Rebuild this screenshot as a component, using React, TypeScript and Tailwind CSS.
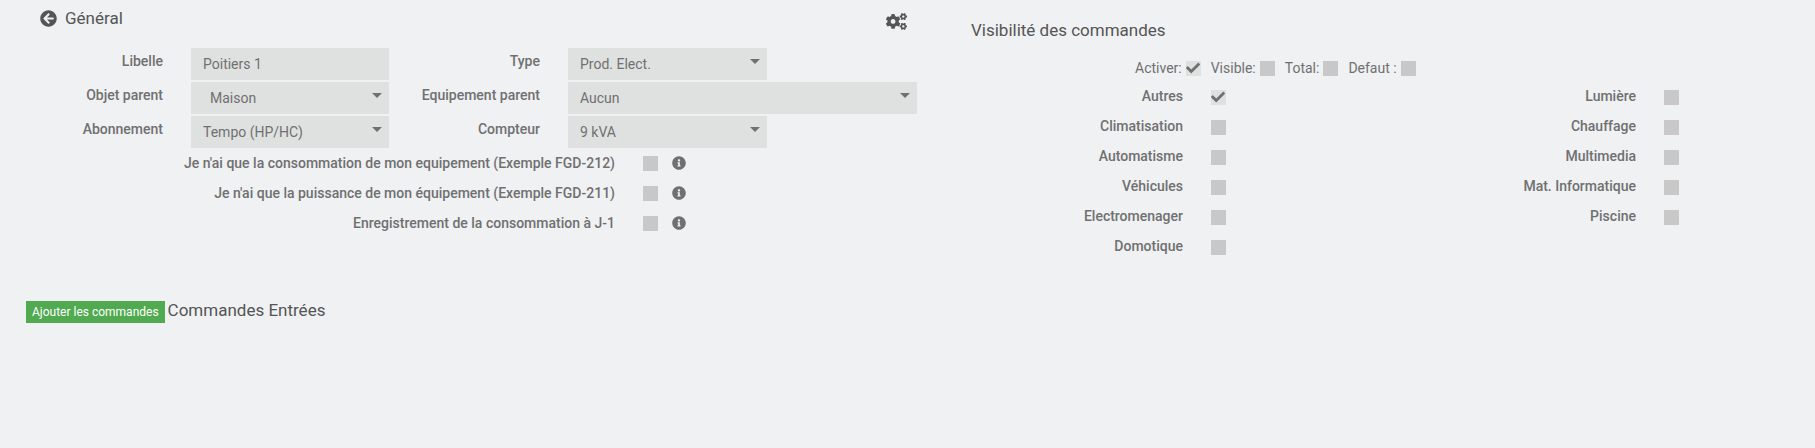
import { useId, type ReactNode } from "react";
import { FaArrowCircleLeft, FaCheck, FaCogs, FaInfoCircle } from "react-icons/fa";

function Tick({ id, name, checked = false }: { id: string; name?: string; checked?: boolean }) {
  return (
    <span className="inline-grid size-[15px] shrink-0">
      <input
        id={id}
        name={name}
        type="checkbox"
        defaultChecked={checked}
        className="peer col-start-1 row-start-1 size-[15px] appearance-none bg-[#c8c8c8] checked:bg-[#dfe1e0]"
      />
      <FaCheck className="pointer-events-none col-start-1 row-start-1 hidden size-3.5 peer-checked:block" />
    </span>
  );
}

function FieldLabel({ htmlFor, children }: { htmlFor: string; children: ReactNode }) {
  return (
    <label htmlFor={htmlFor} className="pt-[3px] text-right font-medium whitespace-nowrap">
      {children}
    </label>
  );
}

function SelectField({ id, options, wide = false }: { id: string; options: string[]; wide?: boolean }) {
  return (
    <div className={wide ? "relative w-full" : "relative w-[57%]"}>
      <select id={id} className="block h-8 w-full appearance-none bg-[#dfe1e0] px-3">
        {options.map((option) => (
          <option key={option}>{option}</option>
        ))}
      </select>
      <svg viewBox="0 0 10 5" className="pointer-events-none absolute top-[11px] right-[7px] h-[5px] w-2.5 fill-current">
        <path d="M0 0h10L5 5z" />
      </svg>
    </div>
  );
}

function OptionRow({ label }: { label: string }) {
  const id = useId();
  return (
    <div className="grid h-[30px] grid-cols-[575fr_274fr] items-center gap-x-7">
      <label htmlFor={id} className="text-right font-medium">
        {label}
      </label>
      <div className="flex items-center gap-3.5">
        <Tick id={id} />
        <FaInfoCircle className="size-3.5" />
      </div>
    </div>
  );
}

function InlineTick({ label, checked }: { label: string; checked?: boolean }) {
  const id = useId();
  return (
    <div className="flex items-start gap-1">
      <label htmlFor={id}>{label}</label>
      <div className="flex pt-[3px]">
        <Tick id={id} checked={checked} />
      </div>
    </div>
  );
}

function CategoryTick({ label, checked }: { label: string; checked?: boolean }) {
  const id = useId();
  return (
    <>
      <label htmlFor={id} className="text-right font-medium whitespace-nowrap">
        {label}
      </label>
      <div className="flex pt-1">
        <Tick id={id} checked={checked} />
      </div>
    </>
  );
}

const categories: [string, string?][] = [
  ["Autres", "Lumière"],
  ["Climatisation", "Chauffage"],
  ["Automatisme", "Multimedia"],
  ["Véhicules", "Mat. Informatique"],
  ["Electromenager", "Piscine"],
  ["Domotique"],
];

export default function App() {
  return (
    <main className="min-h-screen bg-[#eff1f3] pb-8 font-[Roboto,sans-serif] text-sm text-[#707070]">
      <div className="grid grid-cols-[877fr_818fr] gap-x-[54px] pr-[26px] pl-10">
        <section>
          <header className="flex h-12 items-start justify-between pr-2.5 text-[#555]">
            <h1 className="flex items-center gap-2 pt-1.5 text-[17px] leading-6">
              <a href="#" aria-label="Retour">
                <FaArrowCircleLeft className="size-[17px]" />
              </a>
              Général
            </h1>
            <button type="button" aria-label="Configuration" className="pt-[13px]">
              <FaCogs className="h-[17px] w-[21px]" />
            </button>
          </header>

          <div className="grid grid-cols-[123fr_198fr_123fr_349fr] items-start gap-x-7 gap-y-0.5">
            <FieldLabel htmlFor="libelle">Libelle</FieldLabel>
            <input id="libelle" type="text" defaultValue="Poitiers 1" className="h-8 w-full bg-[#dfe1e0] px-3" />
            <FieldLabel htmlFor="type">Type</FieldLabel>
            <SelectField id="type" options={["Prod. Elect."]} />

            <FieldLabel htmlFor="objet">Objet parent</FieldLabel>
            <SelectField id="objet" wide options={["\u00a0\u00a0Maison"]} />
            <FieldLabel htmlFor="equipement">Equipement parent</FieldLabel>
            <SelectField id="equipement" wide options={["Aucun"]} />

            <FieldLabel htmlFor="abonnement">Abonnement</FieldLabel>
            <SelectField id="abonnement" wide options={["Tempo (HP/HC)"]} />
            <FieldLabel htmlFor="compteur">Compteur</FieldLabel>
            <SelectField id="compteur" options={["9 kVA"]} />
          </div>

          <OptionRow label="Je n'ai que la consommation de mon equipement (Exemple FGD-212)" />
          <OptionRow label="Je n'ai que la puissance de mon équipement (Exemple FGD-211)" />
          <OptionRow label="Enregistrement de la consommation à J-1" />
        </section>

        <section>
          <h2 className="pt-[18px] text-[17px] leading-6 text-[#555]">Visibilité des commandes</h2>
          <div className="grid grid-cols-[164fr_654fr] pt-4">
            <div className="col-start-2 flex gap-2.5">
              <InlineTick label="Activer:" checked />
              <InlineTick label="Visible:" />
              <InlineTick label="Total:" />
              <InlineTick label="Defaut :" />
            </div>
          </div>
          <div className="grid grid-cols-[212fr_185fr_212fr_125fr] gap-x-7 gap-y-2.5 pt-2">
            {categories.map(([left, right]) => (
              <div key={left} className="contents">
                <CategoryTick label={left} checked={left === "Autres"} />
                {right && <CategoryTick label={right} />}
              </div>
            ))}
          </div>
        </section>
      </div>

      <section className="flex items-baseline gap-[3px] pt-[42px] pl-[26px]">
        <button type="button" className="h-[22px] bg-[#50aa50] px-1.5 text-xs text-white">
          Ajouter les commandes
        </button>
        <h2 className="text-[17px] leading-6 text-[#555]">Commandes Entrées</h2>
      </section>
    </main>
  );
}
